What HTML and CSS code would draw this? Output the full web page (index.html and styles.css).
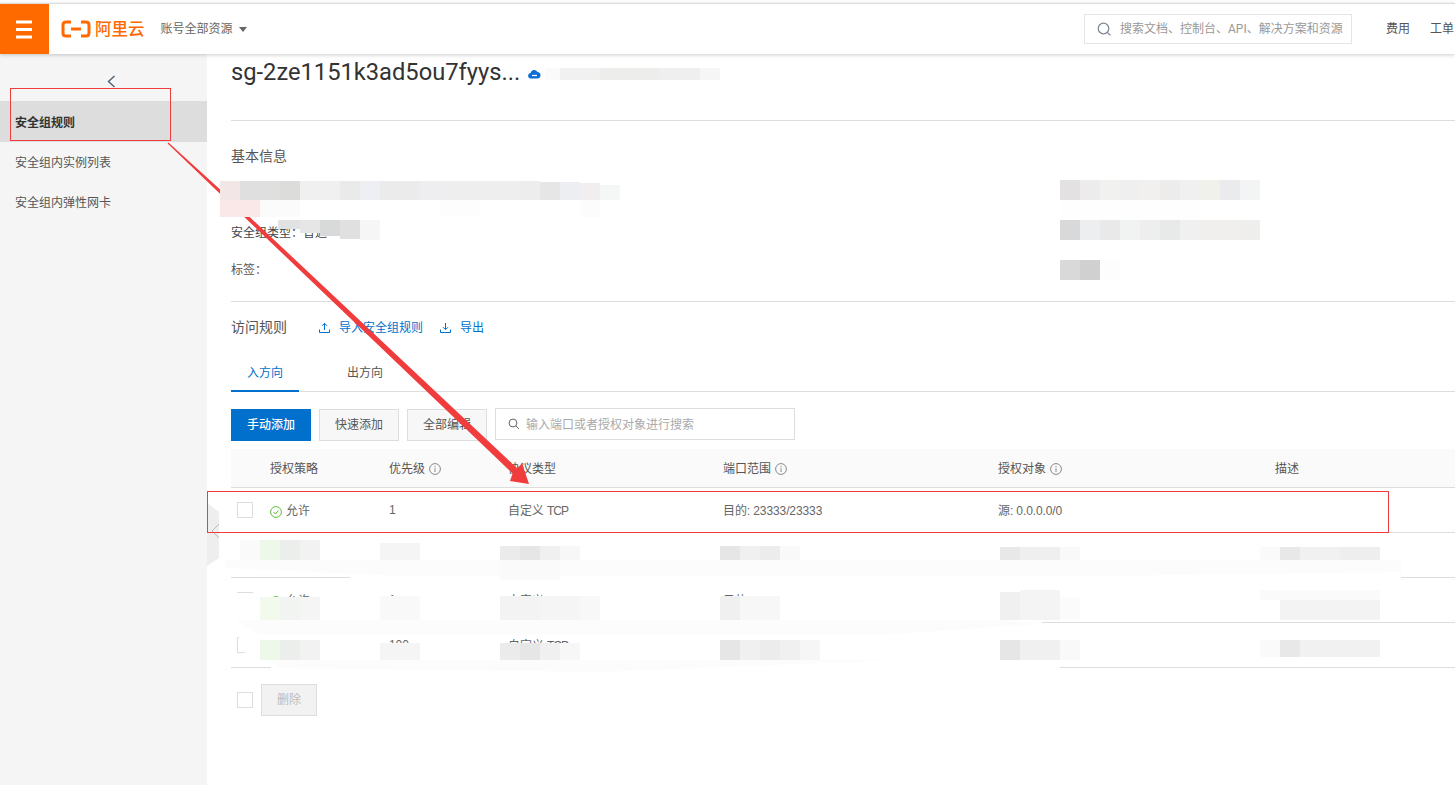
FILE: index.html
```html
<!DOCTYPE html>
<html lang="zh-CN">
<head>
    <meta charset="UTF-8">
    <meta name="viewport" content="width=device-width, initial-scale=1.0">
    <title>安全组规则</title>
    <link rel="stylesheet" href="styles.css">
</head>
<body>
    <header class="topbar">
        <div class="menu-btn">
            <svg width="16" height="19" viewBox="0 0 16 19"><path d="M0 2h16M0 9.500h16M0 17h16" stroke="#fff" stroke-width="3" fill="none"/></svg>
        </div>
        <div class="logo">
            <svg width="30" height="18" viewBox="0 0 30 18"><path d="M10 2H5Q2 2 2 5v8q0 3 3 3h5M20 2h5q3 0 3 3v8q0 3-3 3h-5M10 9h10" stroke="#ff6a00" stroke-width="3" fill="none"/></svg>
            <span>阿里云</span>
        </div>
        <div class="account"><span>账号全部资源</span><i class="caret"></i></div>
        <div class="top-search">
            <svg width="14" height="14" viewBox="0 0 14 14"><circle cx="6.500" cy="6.500" r="5.300" stroke="#7b8590" stroke-width="1.200" fill="none"/><path d="M10.300 10.300L13.300 13.300" stroke="#7b8590" stroke-width="1.200"/></svg>
            <span>搜索文档、控制台、API、解决方案和资源</span>
        </div>
        <nav class="top-links"><span>费用</span><span>工单</span></nav>
    </header>

    <div class="layout">
        <aside class="sidebar">
            <div class="collapse">
                <svg width="9" height="13" viewBox="0 0 9 13"><path d="M7.500 1L1.500 6.500L7.500 12" stroke="#546478" stroke-width="1.500" fill="none"/></svg>
            </div>
            <a class="side-item active">安全组规则</a>
            <a class="side-item">安全组内实例列表</a>
            <a class="side-item">安全组内弹性网卡</a>
        </aside>

        <main class="content">
            <div class="title-row">
                <h1>sg-2ze1151k3ad5ou7fyys...</h1>
                <svg class="cloud" width="13" height="10" viewBox="0 0 13 10"><path d="M3 9.500a2.700 2.700 0 0 1-.4-5.400A3.600 3.600 0 0 1 9.400 3a3.300 3.300 0 0 1 .6 6.500z" fill="#0a6fd6"/><path d="M4 6.500h5" stroke="#fff" stroke-width="1.200"/></svg>
            </div>

            <section class="info">
                <h2>基本信息</h2>
                <div class="info-row first"></div>
                <div class="info-row second">安全组类型：普通</div>
                <div class="info-row third">标签：</div>
            </section>

            <div class="rule-head">
                <span class="rule-title">访问规则</span>
                <a class="rule-link">
                    <svg width="11" height="11" viewBox="0 0 11 11"><path d="M5.500 8V1.500M3 3.800L5.500 1.300L8 3.800M.5 7.500v3h10v-3" stroke="#0070cc" fill="none"/></svg>
                    <span>导入安全组规则</span>
                </a>
                <a class="rule-link">
                    <svg width="11" height="11" viewBox="0 0 11 11"><path d="M5.500 1v6.500M3 5.200L5.500 7.700L8 5.200M.5 7.500v3h10v-3" stroke="#0070cc" fill="none"/></svg>
                    <span>导出</span>
                </a>
            </div>

            <div class="tabs">
                <div class="tab active">入方向</div>
                <div class="tab">出方向</div>
            </div>

            <div class="toolbar">
                <button class="btn primary">手动添加</button>
                <button class="btn">快速添加</button>
                <button class="btn">全部编辑</button>
                <div class="table-search">
                    <svg width="12" height="12" viewBox="0 0 12 12"><circle cx="5" cy="5" r="3.900" stroke="#666" fill="none"/><path d="M8 8L11 11" stroke="#666"/></svg>
                    <span>输入端口或者授权对象进行搜索</span>
                </div>
            </div>

            <table class="rules">
                <colgroup>
                    <col class="c-check"><col class="c-policy"><col class="c-prio"><col class="c-proto"><col class="c-port"><col class="c-auth"><col>
                </colgroup>
                <thead>
                    <tr>
                        <th></th>
                        <th>授权策略</th>
                        <th>优先级<svg class="tip" width="12" height="12" viewBox="0 0 12 12"><circle cx="6" cy="6" r="5.400" stroke="#888" fill="none"/><path d="M6 5.200v3.800M6 3v1.200" stroke="#888"/></svg></th>
                        <th>协议类型</th>
                        <th>端口范围<svg class="tip" width="12" height="12" viewBox="0 0 12 12"><circle cx="6" cy="6" r="5.400" stroke="#888" fill="none"/><path d="M6 5.200v3.800M6 3v1.200" stroke="#888"/></svg></th>
                        <th>授权对象<svg class="tip" width="12" height="12" viewBox="0 0 12 12"><circle cx="6" cy="6" r="5.400" stroke="#888" fill="none"/><path d="M6 5.200v3.800M6 3v1.200" stroke="#888"/></svg></th>
                        <th>描述</th>
                    </tr>
                </thead>
                <tbody>
                    <tr>
                        <td><span class="check"></span></td>
                        <td><svg class="ok" width="12" height="12" viewBox="0 0 12 12"><circle cx="6" cy="6" r="5.400" stroke="#5fc13e" fill="none"/><path d="M3.500 6L5.500 8L8.500 4.300" stroke="#5fc13e" fill="none"/></svg>允许</td>
                        <td>1</td>
                        <td>自定义 <span class="tcp">TCP</span></td>
                        <td>目的: 23333/23333</td>
                        <td>源: 0.0.0.0/0</td>
                        <td></td>
                    </tr>
                    <tr>
                        <td></td><td></td><td></td><td></td><td></td><td></td><td></td>
                    </tr>
                    <tr>
                        <td><span class="check"></span></td>
                        <td><svg class="ok" width="12" height="12" viewBox="0 0 12 12"><circle cx="6" cy="6" r="5.400" stroke="#5fc13e" fill="none"/><path d="M3.500 6L5.500 8L8.500 4.300" stroke="#5fc13e" fill="none"/></svg>允许</td>
                        <td>1</td>
                        <td>自定义 <span class="tcp">TCP</span></td>
                        <td>目的: 23333/23333</td>
                        <td></td>
                        <td></td>
                    </tr>
                    <tr>
                        <td><span class="check"></span></td>
                        <td></td>
                        <td>100</td>
                        <td>自定义 <span class="tcp">TCP</span></td>
                        <td></td>
                        <td></td>
                        <td></td>
                    </tr>
                </tbody>
            </table>

            <div class="table-foot">
                <span class="check"></span>
                <button class="btn disabled">删除</button>
            </div>
        </main>
    </div>

    <!-- marks drawn over the screenshot: redaction, red boxes, arrow -->
    <svg class="markup" width="1455" height="785" viewBox="0 0 1455 785">
        <!-- side handle -->
        <path d="M207 503L219 512V558L207 566z" fill="#eee"/>
        <path d="M219 524L212 531L219 538" stroke="#bbb" fill="none"/>

        <!-- white smears over the rows -->
        <g fill="#fff">
            <path d="M219 533H1401V579H350V576H231V590H219z"/>
            <rect x="219" y="579" width="1182" height="12"/>
            <rect x="219" y="593" width="41" height="42"/>
            <rect x="780" y="596" width="70" height="24"/>
            <rect x="1000" y="591" width="401" height="30"/>
            <rect x="219" y="620" width="823" height="15"/>
            <rect x="239" y="635" width="21" height="15"/>
            <rect x="245" y="650" width="15" height="10"/>
            <rect x="271" y="660" width="789" height="10"/>
            <rect x="231" y="658" width="40" height="8"/>
        </g>
        <g fill="#fcfcfc">
            <path d="M225 560H1400L1402 572L1100 576H400L225 568z"/>
            <path d="M235 620H1000L1040 624L880 635H260z"/>
            <path d="M270 660H900L600 672L280 668z"/>
        </g>

        <!-- arrow -->
        <path d="M167.600 143.400L168.400 142.600L229.200 197.700L517.400 468.500L522 463L529 484L510 481L512.600 473.500L226.800 200.300z" fill="#f03c3c"/>

        <!-- mosaic: title -->
        <g>
            <rect x="545" y="68" width="15" height="12" fill="#fafafa"/>
            <rect x="560" y="68" width="40" height="12" fill="#f1f1f1"/>
            <rect x="600" y="68" width="60" height="12" fill="#ededeb"/>
            <rect x="660" y="68" width="40" height="12" fill="#efefef"/>
            <rect x="700" y="68" width="20" height="12" fill="#f6f6f6"/>
        </g>
        <!-- mosaic: info left -->
        <g>
            <rect x="220" y="181" width="20" height="19" fill="#f2e6e6"/>
            <rect x="240" y="181" width="40" height="19" fill="#dfdfdf"/>
            <rect x="280" y="181" width="20" height="19" fill="#dcdcda"/>
            <rect x="300" y="181" width="40" height="19" fill="#f0f0f0"/>
            <rect x="340" y="181" width="20" height="19" fill="#eaeaea"/>
            <rect x="360" y="181" width="20" height="19" fill="#eeeff2"/>
            <rect x="380" y="181" width="40" height="19" fill="#ebebeb"/>
            <rect x="420" y="181" width="20" height="19" fill="#eeeef1"/>
            <rect x="440" y="181" width="80" height="19" fill="#efeeee"/>
            <rect x="520" y="181" width="20" height="19" fill="#ededed"/>
            <rect x="540" y="182" width="20" height="18" fill="#e6e6e6"/>
            <rect x="560" y="182" width="20" height="18" fill="#edeef1"/>
            <rect x="580" y="183" width="20" height="17" fill="#f0eeee"/>
            <rect x="600" y="185" width="20" height="15" fill="#f5f6f6"/>
            <rect x="220" y="200" width="40" height="17" fill="#fae8e8"/>
            <rect x="260" y="200" width="40" height="17" fill="#fbfbfb"/>
            <rect x="440" y="200" width="40" height="17" fill="#fdfdfd"/>
            <rect x="580" y="200" width="20" height="17" fill="#fcfcfc"/>
            <rect x="278" y="220" width="22" height="9" fill="#e0e2e4"/>
            <rect x="300" y="220" width="20" height="13" fill="#e6e6e6"/>
            <rect x="320" y="220" width="20" height="16" fill="#d8dad9"/>
            <rect x="340" y="220" width="20" height="19" fill="#e0e0e0"/>
            <rect x="360" y="220" width="20" height="20" fill="#f6f6f6"/>
        </g>
        <!-- mosaic: info right -->
        <g>
            <rect x="1060" y="180" width="20" height="20" fill="#e3e1e2"/>
            <rect x="1080" y="180" width="20" height="20" fill="#ececec"/>
            <rect x="1100" y="180" width="20" height="20" fill="#f1f1ef"/>
            <rect x="1120" y="180" width="20" height="20" fill="#efeff0"/>
            <rect x="1140" y="180" width="20" height="20" fill="#f1f0ee"/>
            <rect x="1160" y="180" width="20" height="20" fill="#ececec"/>
            <rect x="1180" y="180" width="20" height="20" fill="#f0f0f0"/>
            <rect x="1200" y="180" width="20" height="20" fill="#f1f1ec"/>
            <rect x="1220" y="180" width="20" height="20" fill="#ebebee"/>
            <rect x="1240" y="180" width="20" height="20" fill="#f3f5f4"/>
            <rect x="1060" y="200" width="140" height="20" fill="#fefefe"/>
            <rect x="1060" y="220" width="20" height="20" fill="#d9d9d9"/>
            <rect x="1080" y="220" width="20" height="20" fill="#eceef0"/>
            <rect x="1100" y="220" width="20" height="20" fill="#e9e9e9"/>
            <rect x="1120" y="220" width="20" height="20" fill="#f0f3f2"/>
            <rect x="1140" y="220" width="20" height="20" fill="#eeeeee"/>
            <rect x="1160" y="220" width="20" height="20" fill="#e8eae9"/>
            <rect x="1180" y="220" width="20" height="20" fill="#f0f0f0"/>
            <rect x="1200" y="220" width="40" height="20" fill="#f0efed"/>
            <rect x="1240" y="220" width="20" height="20" fill="#eeeeec"/>
            <rect x="1060" y="260" width="20" height="20" fill="#d9d9d9"/>
            <rect x="1080" y="260" width="20" height="20" fill="#d0d0d0"/>
            <rect x="1100" y="260" width="20" height="20" fill="#fdfdfd"/>
        </g>
        <!-- mosaic: row 2 -->
        <g>
            <rect x="240" y="540" width="20" height="20" fill="#fafafa"/>
            <rect x="260" y="540" width="20" height="20" fill="#eef8ea"/>
            <rect x="280" y="540" width="20" height="20" fill="#eceeec"/>
            <rect x="300" y="540" width="20" height="20" fill="#f2f2f2"/>
            <rect x="380" y="543" width="40" height="17" fill="#f5f5f5"/>
            <rect x="500" y="546" width="20" height="14" fill="#ebebeb"/>
            <rect x="520" y="546" width="20" height="14" fill="#e6e6e6"/>
            <rect x="540" y="546" width="20" height="14" fill="#f0f0f0"/>
            <rect x="560" y="546" width="20" height="14" fill="#f7f7f7"/>
            <rect x="500" y="560" width="60" height="20" fill="#fafafa"/>
            <rect x="720" y="546" width="20" height="14" fill="#e6e6e6"/>
            <rect x="740" y="546" width="20" height="14" fill="#f0f0f0"/>
            <rect x="760" y="546" width="20" height="14" fill="#ececec"/>
            <rect x="780" y="546" width="20" height="14" fill="#f9f9f9"/>
            <rect x="1000" y="547" width="20" height="13" fill="#e8e8e8"/>
            <rect x="1020" y="547" width="40" height="13" fill="#efefef"/>
            <rect x="1060" y="547" width="20" height="13" fill="#f9f9f9"/>
            <rect x="1260" y="547" width="20" height="13" fill="#fafafa"/>
            <rect x="1280" y="547" width="20" height="13" fill="#e8e8e8"/>
            <rect x="1300" y="547" width="40" height="13" fill="#f1f1f1"/>
            <rect x="1340" y="547" width="40" height="13" fill="#eeeeee"/>
        </g>
        <!-- mosaic: row 3 -->
        <g>
            <rect x="260" y="597" width="20" height="23" fill="#f2faee"/>
            <rect x="280" y="597" width="20" height="23" fill="#f2f4f2"/>
            <rect x="300" y="597" width="20" height="23" fill="#f5f5f5"/>
            <rect x="380" y="596" width="40" height="24" fill="#f9f9f9"/>
            <rect x="500" y="596" width="40" height="24" fill="#f3f3f3"/>
            <rect x="540" y="596" width="40" height="24" fill="#f5f5f5"/>
            <rect x="580" y="596" width="20" height="24" fill="#f8f8f8"/>
            <rect x="720" y="596" width="20" height="24" fill="#f0f0f0"/>
            <rect x="740" y="596" width="40" height="24" fill="#f7f7f7"/>
            <rect x="1000" y="592" width="20" height="28" fill="#f0f0f0"/>
            <rect x="1020" y="590" width="40" height="30" fill="#f4f4f4"/>
            <rect x="1060" y="597" width="20" height="23" fill="#fbfbfb"/>
            <rect x="1260" y="590" width="120" height="10" fill="#fafafa"/>
            <rect x="1280" y="600" width="100" height="20" fill="#f3f3f3"/>
        </g>
        <!-- mosaic: row 4 -->
        <g>
            <rect x="260" y="640" width="20" height="20" fill="#eef8ea"/>
            <rect x="280" y="640" width="20" height="20" fill="#eceeec"/>
            <rect x="300" y="640" width="20" height="20" fill="#f2f2f2"/>
            <rect x="380" y="643" width="40" height="17" fill="#f5f5f5"/>
            <rect x="500" y="643" width="20" height="17" fill="#ebebeb"/>
            <rect x="520" y="643" width="20" height="17" fill="#e6e6e6"/>
            <rect x="540" y="643" width="20" height="17" fill="#f0f0f0"/>
            <rect x="560" y="643" width="20" height="17" fill="#f7f7f7"/>
            <rect x="720" y="640" width="20" height="20" fill="#e6e6e6"/>
            <rect x="740" y="640" width="20" height="20" fill="#f0f0f0"/>
            <rect x="760" y="640" width="20" height="20" fill="#ececec"/>
            <rect x="780" y="640" width="20" height="20" fill="#f0f0f0"/>
            <rect x="800" y="640" width="20" height="20" fill="#f6f6f6"/>
            <rect x="1000" y="640" width="20" height="20" fill="#e6e6e6"/>
            <rect x="1020" y="640" width="40" height="20" fill="#f0f0f0"/>
            <rect x="1060" y="640" width="20" height="20" fill="#f9f9f9"/>
            <rect x="1260" y="640" width="20" height="17" fill="#fafafa"/>
            <rect x="1280" y="640" width="20" height="17" fill="#e8e8e8"/>
            <rect x="1300" y="640" width="80" height="17" fill="#f1f1f1"/>
        </g>

        <!-- red boxes -->
        <rect x="10.500" y="88.500" width="160" height="52" fill="none" stroke="#f03c3c"/>
        <rect x="207.500" y="491.500" width="1181" height="41" fill="none" stroke="#f03c3c"/>
    </svg>
</body>
</html>
```

FILE: styles.css
```css
* {
    box-sizing: border-box;
}
html, body {
    height: 100%;
}
body {
    margin: 0;
    padding-top: 3px;
    overflow: hidden;
    position: relative;
    background: #fff;
    color: #555;
    font-family: Roboto, "Noto Sans CJK SC", sans-serif;
    font-size: 12px;
}

/* top bar */
.topbar {
    display: flex;
    align-items: center;
    height: 51px;
    border-top: 1px solid #ddd;
    background: #fff;
    box-shadow: 0 1px 4px rgba(0, 0, 0, 0.2);
    position: relative;
    z-index: 2;
}
.menu-btn {
    display: flex;
    align-items: center;
    justify-content: center;
    width: 49px;
    height: 100%;
    padding-right: 2px;
    background: #ff6a00;
}
.logo {
    display: flex;
    align-items: center;
    gap: 4px;
    margin-left: 12px;
    color: #ff6a00;
    font-size: 16.500px;
    font-weight: 500;
}
.logo span {
    padding-bottom: 2px;
}
.account {
    display: flex;
    align-items: center;
    margin-left: 16px;
    color: #666;
}
.account span {
    padding-bottom: 3px;
}
.caret {
    margin-left: 6px;
    border: 4px solid transparent;
    border-top: 5px solid #666;
    border-bottom: 0;
}
.top-search {
    display: flex;
    align-items: center;
    gap: 9px;
    width: 268px;
    height: 30px;
    margin-left: auto;
    padding-left: 12px;
    border: 1px solid #e5e5e5;
    color: #999;
    white-space: nowrap;
    overflow: hidden;
}
.top-search span {
    padding-bottom: 3px;
}
.top-links {
    display: flex;
    gap: 20px;
    width: 103px;
    padding-left: 34px;
    padding-bottom: 3px;
    color: #555;
    white-space: nowrap;
}

/* sidebar */
.layout {
    display: flex;
    height: 731px;
}
.sidebar {
    flex: 0 0 207px;
    background: #f5f5f5;
}
.collapse {
    display: flex;
    justify-content: center;
    align-items: center;
    height: 47px;
    padding-top: 8px;
    padding-left: 16px;
}
.side-item {
    display: flex;
    align-items: center;
    height: 40px;
    padding-left: 15px;
    padding-bottom: 2px;
    color: #555;
}
.side-item.active {
    height: 41px;
    padding-bottom: 0;
    background: #ddd;
    color: #333;
    font-weight: 700;
}

/* main */
.content {
    flex: 1;
    min-width: 0;
    padding-left: 24px;
}
.title-row {
    display: flex;
    align-items: center;
    height: 67px;
    padding-bottom: 31px;
    border-bottom: 1px solid #ddd;
}
h1 {
    margin: 0;
    color: #333;
    font-size: 23.700px;
    font-weight: 400;
    white-space: nowrap;
}
.cloud {
    margin: 5px 0 0 8px;
}
.info {
    height: 181px;
    border-bottom: 1px solid #ddd;
}
h2 {
    margin: 0;
    padding-top: 26px;
    color: #555;
    font-size: 14px;
    font-weight: 400;
    line-height: 18px;
}
.info-row.first {
    height: 40px;
}
.info-row.second {
    height: 38px;
    line-height: 56px;
    color: #444;
}
.info-row.third {
    margin-top: 17px;
    height: 20px;
    line-height: 20px;
}
.rule-head {
    display: flex;
    align-items: center;
    height: 51px;
}
.rule-title {
    width: 88px;
    padding-bottom: 2px;
    font-size: 14px;
    line-height: 18px;
}
.rule-link {
    display: flex;
    align-items: center;
    gap: 9px;
    margin-right: 17px;
    color: #0070cc;
}
.rule-link span {
    padding-bottom: 2px;
}
.tabs {
    display: flex;
    height: 39px;
    border-bottom: 1px solid #ddd;
}
.tab {
    width: 68px;
    height: 39px;
    padding-top: 12px;
    line-height: 16px;
    text-align: center;
    color: #555;
}
.tab + .tab {
    margin-left: 32px;
}
.tab.active {
    border-bottom: 2px solid #0070cc;
    color: #0070cc;
}
.toolbar {
    display: flex;
    gap: 8px;
    margin-top: 17px;
}
.btn {
    width: 80px;
    height: 32px;
    padding: 0 0 3px;
    border: 1px solid #ddd;
    background: #f7f7f7;
    color: #555;
    font-family: inherit;
    font-size: 12px;
}
.btn.primary {
    border-color: #0070cc;
    background: #0070cc;
    color: #fff;
    font-weight: 500;
}
.btn.disabled {
    width: 56px;
    background: #f2f2f2;
    color: #bbb;
}
.table-search {
    display: flex;
    align-items: center;
    gap: 6px;
    width: 300px;
    height: 32px;
    margin-top: -1px;
    padding-left: 12px;
    border: 1px solid #ddd;
    color: #aaa;
}
.table-search span {
    padding-bottom: 2px;
}

/* table */
.rules {
    width: 1224px;
    margin-top: 8px;
    border-collapse: collapse;
    table-layout: fixed;
}
.c-check { width: 39px; }
.c-policy { width: 119px; }
.c-prio { width: 119px; }
.c-proto { width: 215px; }
.c-port { width: 275px; }
.c-auth { width: 277px; }
.rules th {
    height: 38px;
    padding: 0;
    border-bottom: 1px solid #ddd;
    background: #fafafa;
    color: #555;
    font-weight: 400;
    text-align: left;
}
.rules td {
    height: 45px;
    padding: 0;
    border-bottom: 1px solid #ddd;
    color: #666;
    font-family: "Liberation Sans", "Noto Sans CJK SC", sans-serif;
    letter-spacing: -0.100px;
}
.tcp {
    letter-spacing: -1px;
}
.tip {
    margin-left: 4px;
    vertical-align: -2px;
}
.ok {
    margin-right: 4px;
    vertical-align: -3px;
}
.check {
    display: block;
    width: 16px;
    height: 16px;
    margin-left: 6px;
    border: 1px solid #ddd;
    background: #fff;
}
.table-foot {
    display: flex;
    align-items: center;
    gap: 8px;
    margin-top: 16px;
}

.markup {
    position: absolute;
    top: 0;
    left: 0;
    z-index: 3;
    pointer-events: none;
}
```
